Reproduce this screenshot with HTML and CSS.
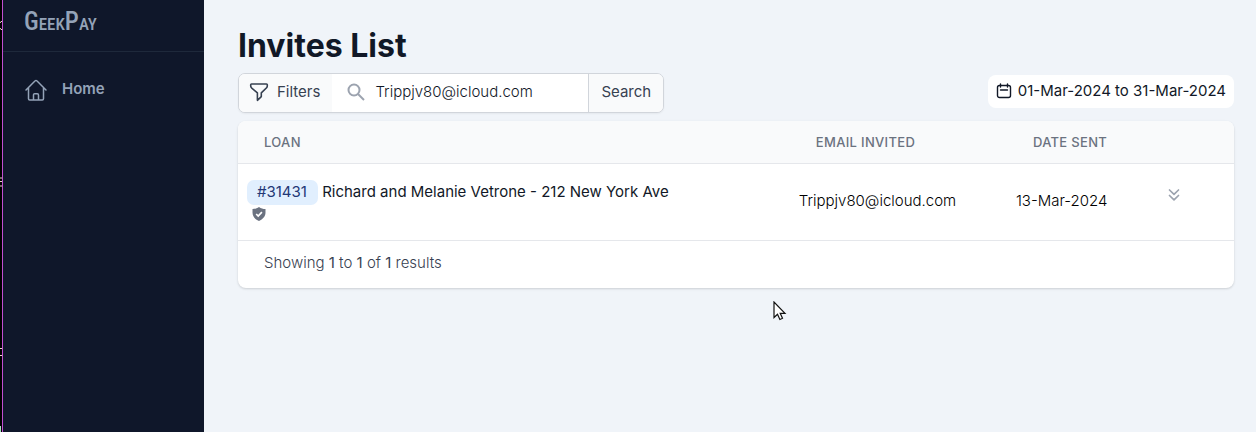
FILE: index.html
```html
<!DOCTYPE html>
<html lang="en">
<head>
<meta charset="utf-8">
<title>Invites List</title>
<link rel="stylesheet" href="styles.css">
</head>
<body>
<div class="app">
  <div class="edge" aria-hidden="true">
    <svg width="2" height="432" viewBox="0 0 2 432"><path d="M2 21.500H1L0 23M0 28l1 1.500h1M2 178H0M2 181.500H0M2 186H0M0 348.500h2M0 355.500h2" fill="none" stroke="#e8d9c8"/><path d="M0 426h1v6H0z" fill="#a9dcc0"/></svg>
  </div>
  <aside class="sidebar">
    <a class="logo" href="#" aria-label="GeekPay"><span class="logo-cap">G</span>EEK<span class="logo-cap">P</span>AY</a>
    <nav class="nav">
      <a class="nav-link" href="#">
        <svg class="icon" width="24" height="24" viewBox="0 0 24 24" fill="none" stroke="currentColor" stroke-width="1.500" stroke-linecap="round" stroke-linejoin="round"><path d="m2 12 9.200-9.200a1.100 1.100 0 0 1 1.600 0L22 12M4.500 9.800v10.900c0 .7.500 1.200 1.200 1.200h12.600c.7 0 1.200-.5 1.200-1.200V9.800M9.500 21.500v-4.600c0-.7.500-1.200 1.200-1.200h2.600c.7 0 1.200.5 1.200 1.200v4.600"/></svg>
        <span>Home</span>
      </a>
    </nav>
  </aside>
  <main class="main">
    <h1 class="title">Invites List</h1>
    <div class="toolbar">
      <form class="search">
        <button class="filters" type="button">
          <svg class="icon" width="20" height="20" viewBox="0 0 20 20" fill="none" stroke="currentColor" stroke-width="1.600" stroke-linejoin="round"><path d="M2.500 2h15c.5 0 .8.400.8.800v1.300c0 .7-.2 1.200-.7 1.700l-5.300 5.100v3.700L8.400 18.300v-7.400L2.500 5.800c-.5-.5-.8-1-.8-1.700V2.800c0-.4.300-.8.800-.8z"/></svg>
          <span>Filters</span>
        </button>
        <label class="field">
          <svg class="icon field-icon" width="20" height="20" viewBox="0 0 20 20" fill="none" stroke="currentColor" stroke-width="2"><circle cx="8" cy="8" r="5.500"/><path d="m12 12 6 6"/></svg>
          <input class="input" type="text" aria-label="Search invites" value="Trippjv80@icloud.com">
        </label>
        <button class="submit" type="button">Search</button>
      </form>
      <button class="dates" type="button">
        <svg class="icon" width="16" height="16" viewBox="0 0 16 16" fill="none" stroke="currentColor" stroke-width="1.400" stroke-linecap="round"><rect x="1.500" y="2.500" width="13" height="12" rx="2"/><path d="M4.500 1v3M11.500 1v3M4.500 7h7"/></svg>
        <span>01-Mar-2024 to 31-Mar-2024</span>
      </button>
    </div>
    <section class="card">
      <table class="table">
        <colgroup><col class="col-loan"><col class="col-email"><col class="col-date"><col></colgroup>
        <thead>
          <tr><th>Loan</th><th>Email invited</th><th>Date sent</th><th></th></tr>
        </thead>
        <tbody>
          <tr>
            <td class="loan">
              <a class="badge" href="#">#31431</a>
              <span>Richard and Melanie Vetrone - 212 New York Ave</span>
              <svg class="shield" width="14" height="14" viewBox="0 0 14 14"><path d="M7 0c2 1.500 4 2 6.500 2v3.500c0 4-2.700 6.800-6.500 8.500C3.200 12.300.5 9.500.5 5.500V2C3 2 5 1.500 7 0z" fill="#6b7280"/><path d="m4.200 7 2 2 3.700-3.900" fill="none" stroke="#fff" stroke-width="1.700"/></svg>
            </td>
            <td class="light">Trippjv80@icloud.com</td>
            <td class="light">13-Mar-2024</td>
            <td><button class="expand" type="button" aria-label="Show details"><svg class="icon" width="14" height="14" viewBox="0 0 14 14" fill="none" stroke="currentColor" stroke-width="1.700" stroke-linecap="round" stroke-linejoin="round"><path d="m2.500 2 4.500 4.300L11.500 2M2.500 7.500 7 11.800l4.500-4.300"/></svg></button></td>
          </tr>
        </tbody>
      </table>
      <p class="summary">Showing <b>1</b> to <b>1</b> of <b>1</b> results</p>
    </section>
  </main>
</div>
<svg class="cursor" width="14" height="20" viewBox="0 0 14 20" aria-hidden="true"><path d="M1 1v15.500l3.500-3.300 2.400 5.300 2.600-1.200-2.300-5H12z" fill="#fff" stroke="#111" stroke-width="1.200"/></svg>
</body>
</html>
```
FILE: styles.css
```css
* { box-sizing: border-box; }
body {
  margin: 0;
  background: #f0f4f9;
  color: #111827;
  font: 400 15px/24px Inter, "Liberation Sans", sans-serif;
}
button, input { font: inherit; color: inherit; }
button { border: 0; background: none; padding: 0; }
.icon { display: block; flex: none; }
.app { display: flex; min-height: 100vh; }
.edge {
  flex: none;
  width: 3px;
  background: #000;
  border-right: 1px solid #c04fd0;
}
.edge svg { display: block; }
.sidebar { flex: none; width: 201px; background: #0f172a; color: #94a3b8; }
.logo {
  display: flex;
  align-items: baseline;
  height: 52px;
  padding: 6px 21px 0;
  border-bottom: 1px solid #1e293b;
  color: #94a3b8;
  font: 500 17px/32px "Roboto Condensed", "Liberation Sans Narrow", "DejaVu Sans Condensed", sans-serif;
  text-decoration: none;
}
.logo-cap { font-size: 25px; }
.nav { padding: 25px 21px; }
.nav-link {
  display: flex;
  align-items: center;
  gap: 14px;
  color: #94a3b8;
  font-weight: 600;
  text-decoration: none;
}
.nav-link span { padding-bottom: 2px; }
.main { flex: 1; min-width: 0; padding: 28px 22px 24px 34px; }
.title { margin: 0 0 9px; font-size: 32px; line-height: 36px; font-weight: 700; }
.toolbar { display: flex; justify-content: space-between; align-items: flex-start; margin-bottom: 8px; }
.search {
  display: flex;
  height: 40px;
  border: 1px solid #d1d5db;
  border-radius: 7px;
  overflow: hidden;
  background: #fff;
  color: #374151;
  box-shadow: 0 1px 2px #0000000d;
}
.filters { display: flex; align-items: center; gap: 8px; padding: 0 12px 2px 10px; background: #f9fafb; }
.field { display: flex; align-items: center; gap: 9px; padding: 0 0 2px 14px; }
.field-icon { color: #9ca3af; }
.input { width: 213px; padding: 0; border: 0; outline: 0; background: none; font-weight: 300; color: #111827; }
.submit { padding: 0 12px 2px; border-left: 1px solid #d1d5db; background: #f9fafb; }
.dates {
  display: flex;
  align-items: center;
  gap: 6px;
  height: 33px;
  margin-top: 2px;
  padding: 0 8px 1px;
  border-radius: 8px;
  background: #fff;
}
.card {
  border-radius: 8px;
  overflow: hidden;
  background: #fff;
  box-shadow: 0 1px 3px #0000001a, 0 1px 2px #0000000f;
}
.table { width: 100%; border-spacing: 0; table-layout: fixed; }
.col-loan { width: 55.400%; }
.col-email { width: 21.800%; }
.col-date { width: 12.400%; }
th {
  height: 43px;
  padding: 0 0 1px 26px;
  border-bottom: 1px solid #e5e7eb;
  background: #f9fafb;
  color: #6b7280;
  font-size: 13px;
  font-weight: 500;
  letter-spacing: 0.025em;
  text-align: left;
  text-transform: uppercase;
}
td { height: 77px; padding: 0 0 3px 9px; border-bottom: 1px solid #e5e7eb; }
.light { font-weight: 300; color: #000; }
.badge {
  display: inline-block;
  margin-bottom: 1px;
  padding: 0 11px 1px 10px;
  border-radius: 7px;
  background: #e1effe;
  color: #233876;
  text-decoration: none;
}
.shield { display: block; margin: 1px 0 0 5px; }
.expand { display: block; margin: 0 0 12px 28px; color: #9ca3af; }
.summary { margin: 0; padding: 10px 26px 13px; color: #374151; font-weight: 300; }
.summary b { font-weight: 400; }
.cursor { position: absolute; left: 773px; top: 301px; }
```
